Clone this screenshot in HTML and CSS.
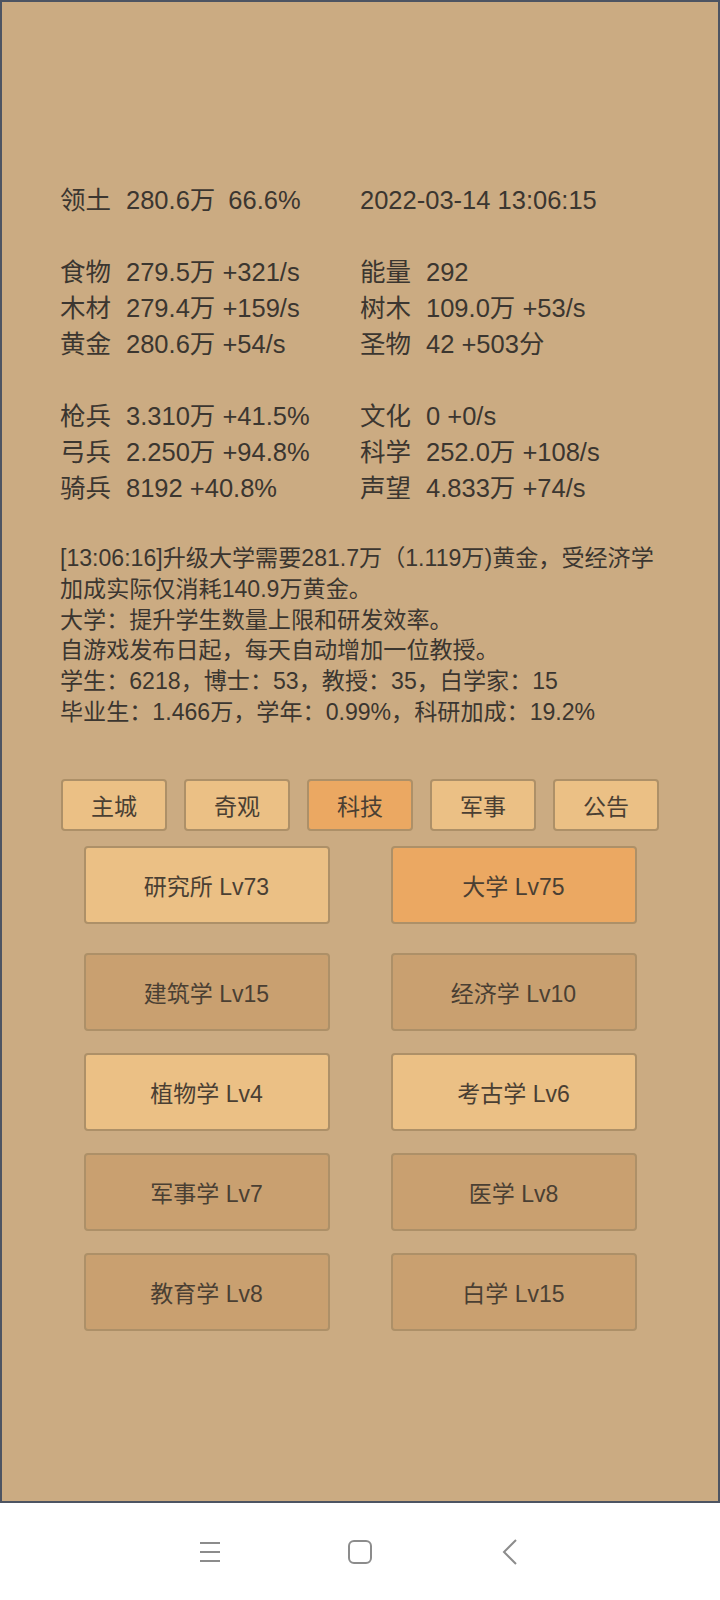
FILE: index.html
```html
<!DOCTYPE html>
<html>
	<head>
		<meta charset="utf-8">
		<title>科技</title>
		<meta name="viewport" content="width=device-width, initial-scale=1.0">
		<link rel="stylesheet" href="styles.css">
	</head>
	<body>

    <div class="screen">

        <div class="stats">
            <div class="cell"><span class="lbl">领土</span>280.6万<span class="pad">66.6%</span></div>
            <div class="cell">2022-03-14 13:06:15</div>
            <div class="cell blank"></div>
            <div class="cell blank"></div>

            <div class="cell"><span class="lbl">食物</span>279.5万 +321/s</div>
            <div class="cell"><span class="lbl">能量</span>292</div>
            <div class="cell"><span class="lbl">木材</span>279.4万 +159/s</div>
            <div class="cell"><span class="lbl">树木</span>109.0万 +53/s</div>
            <div class="cell"><span class="lbl">黄金</span>280.6万 +54/s</div>
            <div class="cell"><span class="lbl">圣物</span>42 +503分</div>
            <div class="cell blank"></div>
            <div class="cell blank"></div>

            <div class="cell"><span class="lbl">枪兵</span>3.310万 +41.5%</div>
            <div class="cell"><span class="lbl">文化</span>0 +0/s</div>
            <div class="cell"><span class="lbl">弓兵</span>2.250万 +94.8%</div>
            <div class="cell"><span class="lbl">科学</span>252.0万 +108/s</div>
            <div class="cell"><span class="lbl">骑兵</span>8192 +40.8%</div>
            <div class="cell"><span class="lbl">声望</span>4.833万 +74/s</div>
        </div>

        <div class="log">
            <p>[13:06:16]升级大学需要281.7万（1.119万)黄金，受经济学加成实际仅消耗140.9万黄金。</p>
            <p>大学：提升学生数量上限和研发效率。</p>
            <p>自游戏发布日起，每天自动增加一位教授。</p>
            <p>学生：6218，博士：53，教授：35，白学家：15</p>
            <p>毕业生：1.466万，学年：0.99%，科研加成：19.2%</p>
        </div>

        <div class="tabs">
            <button class="tab">主城</button>
            <button class="tab">奇观</button>
            <button class="tab active">科技</button>
            <button class="tab">军事</button>
            <button class="tab">公告</button>
        </div>

        <div class="tech-top">
            <button class="tech light">研究所 Lv73</button>
            <button class="tech active">大学 Lv75</button>
        </div>

        <div class="tech-grid">
            <button class="tech dark">建筑学 Lv15</button>
            <button class="tech dark">经济学 Lv10</button>
            <button class="tech light">植物学 Lv4</button>
            <button class="tech light">考古学 Lv6</button>
            <button class="tech dark">军事学 Lv7</button>
            <button class="tech dark">医学 Lv8</button>
            <button class="tech dark">教育学 Lv8</button>
            <button class="tech dark">白学 Lv15</button>
        </div>

    </div>

    <nav class="navbar">
        <span class="nav-item">
            <svg width="24" height="22" viewBox="0 0 24 22"><path d="M2 2h20M2 11h20M2 20h20" stroke="#8c8c8c" stroke-width="2" fill="none"/></svg>
        </span>
        <span class="nav-item">
            <svg width="26" height="26" viewBox="0 0 26 26"><rect x="2" y="2" width="22" height="22" rx="5" stroke="#8c8c8c" stroke-width="2" fill="none"/></svg>
        </span>
        <span class="nav-item">
            <svg width="16" height="28" viewBox="0 0 16 28"><path d="M14 2 2 14l12 12" stroke="#8c8c8c" stroke-width="2" fill="none"/></svg>
        </span>
    </nav>

</body>
</html>
```

FILE: styles.css
```css
html, body { margin: 0; padding: 0; }
body { font-family: "Liberation Sans", "Noto Sans CJK SC", sans-serif; color: #3b3630; background: #fff; }

.screen {
	box-sizing: border-box;
	height: 1503px;
	border: 2px solid #4d5462;
	background: #cbab82;
	padding-top: 180px;
}

.stats {
	display: grid;
	grid-template-columns: 300px 300px;
	padding-left: 58px;
	font-size: 25.5px;
	line-height: 36px;
}
.stats .cell { white-space: nowrap; height: 36px; }
.stats .lbl { display: inline-block; width: 66px; }
.stats .pad { margin-left: 13px; }

.log {
	margin: 37px 0 0 58px;
	width: 610px;
	font-size: 23.1px;
	line-height: 30.8px;
}
.log p { margin: 0; }

.tabs {
	display: flex;
	justify-content: center;
	gap: 17px;
	margin-top: 51px;
}

button {
	font-family: "Liberation Sans", "Noto Sans CJK SC", sans-serif;
	font-size: 23px;
	color: #4a3f33;
	border: 2px solid #ad9068;
	border-radius: 4px;
	padding: 0;
	cursor: pointer;
}

.tab { width: 106px; height: 52px; background: #ebc085; }
.tab.active { background: #eba862; }

.tech-top,
.tech-grid {
	display: grid;
	grid-template-columns: 246px 246px;
	justify-content: center;
	column-gap: 61px;
}
.tech-top { margin-top: 15px; }
.tech-grid { margin-top: 29px; row-gap: 22px; }

.tech { height: 78px; }
.tech.light { background: #ebc085; }
.tech.active { background: #eba862; }
.tech.dark { background: #c9a070; }

.navbar {
	display: flex;
	justify-content: center;
	align-items: center;
	height: 97px;
}
.nav-item { width: 150px; display: flex; justify-content: center; }
```
